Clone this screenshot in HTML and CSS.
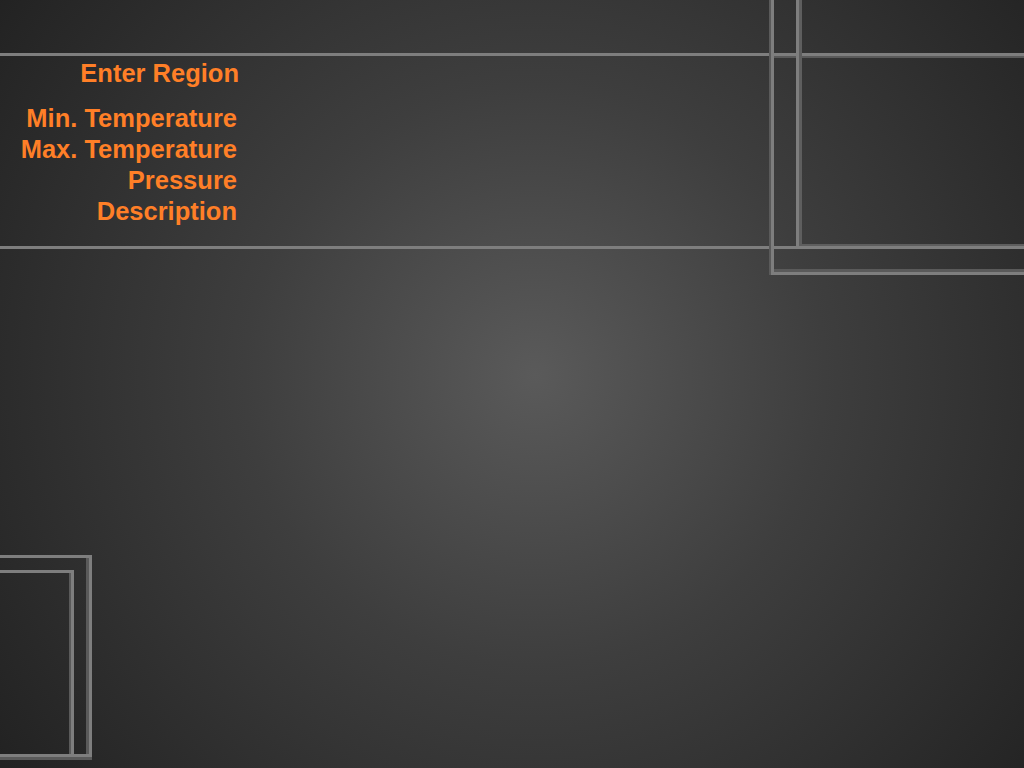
FILE: index.html
```html
<!DOCTYPE html>
<html lang="en">
<head>
<meta charset="utf-8">
<title>Weather</title>
<link rel="stylesheet" href="styles.css">
</head>
<body>
<div class="screen">
  <section class="panel">
    <div class="labels">
      <div class="label label-region">Enter Region</div>
      <div class="fields">
        <div class="label">Min. Temperature</div>
        <div class="label">Max. Temperature</div>
        <div class="label">Pressure</div>
        <div class="label">Description</div>
      </div>
    </div>
  </section>
  <div class="strip-top"></div>
  <div class="frame frame-tr-outer"></div>
  <div class="frame frame-tr-inner"></div>
  <div class="frame frame-bl-outer"></div>
  <div class="frame frame-bl-inner"></div>
</div>
</body>
</html>
```
FILE: styles.css
```css
html, body {
  margin: 0;
  padding: 0;
}
body {
  width: 1024px;
  height: 768px;
  overflow: hidden;
  background: #2a2a2a;
}
.screen {
  position: relative;
  width: 1024px;
  height: 768px;
  overflow: hidden;
  background: radial-gradient(circle at 535px 375px, #5a5a5a 0px, #3e3e3e 290px, #2b2b2b 540px, #1c1c1c 740px);
  display: flex;
  flex-direction: column;
}
.panel {
  margin-top: 53px;
  height: 190px;
  border-top: 3px solid #7e7e7e;
  border-bottom: 3px solid #7e7e7e;
  display: flex;
}
.labels {
  width: 240px;
  padding-top: 2px;
  display: flex;
  flex-direction: column;
  gap: 14px;
}
.label {
  font-family: "Liberation Sans", Arial, sans-serif;
  font-weight: bold;
  font-size: 25.5px;
  line-height: 31px;
  color: #ff7f27;
  text-align: right;
  white-space: nowrap;
}
.label-region {
  padding-right: 1px;
}
.fields {
  display: flex;
  flex-direction: column;
  padding-right: 3px;
}
.strip-top {
  position: absolute;
  left: 774px;
  right: 0;
  top: 56px;
  height: 2px;
  background: #5a5a5a;
}
.frame {
  position: absolute;
  box-sizing: border-box;
}
.frame-tr-outer {
  left: 771px;
  top: -10px;
  right: -10px;
  height: 285px;
  border-left: 3px solid #7e7e7e;
  border-bottom: 3px solid #7e7e7e;
  box-shadow: -2px 0 0 #5a5a5a, inset 0 -3px 0 #5a5a5a;
}
.frame-tr-inner {
  left: 796px;
  top: -10px;
  right: -10px;
  height: 256px;
  border-left: 3px solid #7e7e7e;
  box-shadow: inset 3px -2px 0 #5e5e5e;
}
.frame-bl-outer {
  left: -10px;
  top: 555px;
  width: 102px;
  height: 202px;
  border-top: 3px solid #7e7e7e;
  border-right: 3px solid #7e7e7e;
  border-bottom: 3px solid #7e7e7e;
  box-shadow: inset -3px 0 0 #5a5a5a, 0 3px 0 #5a5a5a;
}
.frame-bl-inner {
  left: -10px;
  top: 570px;
  width: 84px;
  height: 184px;
  border-top: 3px solid #7e7e7e;
  border-right: 3px solid #7e7e7e;
  box-shadow: inset -2px 0 0 #5a5a5a;
}
```
